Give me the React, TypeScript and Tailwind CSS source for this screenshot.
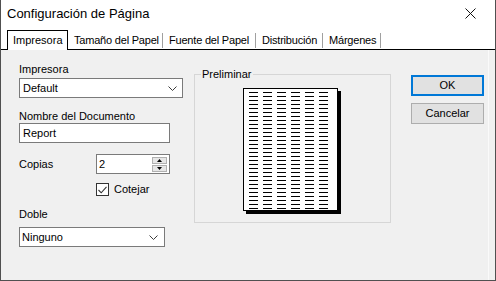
import React from "react";

function Chevron() {
  return (
    <svg width="9" height="5" viewBox="0 0 9 5" className="block">
      <polyline points="0.5,0.5 4.5,4.5 8.5,0.5" fill="none" stroke="#3c3c3c" strokeWidth="1" />
    </svg>
  );
}

function PagePreview() {
  const cols = [5, 19, 33, 47, 61, 75];
  const rows = Array.from({ length: 30 }, (_, i) => 3 + i * 4);
  return (
    <div className="w-[95px] h-[123px] border border-black bg-white shadow-[3px_3px_0_#000] box-border">
      <svg width="93" height="121" viewBox="0 0 93 121" className="block">
        {rows.map((y) =>
          cols.map((x) => <rect key={`${x}-${y}`} x={x} y={y} width={9} height={1} fill="#000" />)
        )}
      </svg>
    </div>
  );
}

export default function App() {
  const tabs = [
    { label: "Tamaño del Papel", w: "w-[95px]" },
    { label: "Fuente del Papel", w: "w-[93px]" },
    { label: "Distribución", w: "w-[67px]" },
    { label: "Márgenes", w: "w-[58px]" },
  ];
  return (
    <div className="w-[496px] h-[281px] bg-[#f0f0f0] border-x border-b border-[#505050] box-border flex flex-col font-['Liberation_Sans',Arial,sans-serif] text-[11px] leading-[13px] text-black">
      {/* Title bar */}
      <div className="h-[29px] bg-white flex items-center">
        <div className="pl-[6px] pb-[3px] text-[13px] leading-[15px] flex-1">Configuración de Página</div>
        <div className="w-[50px] h-[29px] pb-[3px] flex items-center justify-center">
          <svg width="11" height="11" viewBox="0 0 11 11">
            <line x1="0.5" y1="0.5" x2="10.5" y2="10.5" stroke="#111" strokeWidth="1" />
            <line x1="10.5" y1="0.5" x2="0.5" y2="10.5" stroke="#111" strokeWidth="1" />
          </svg>
        </div>
      </div>
      {/* Tabs */}
      <div className="h-[21px] bg-white flex items-end">
        <div className="w-[6px] h-full border-b border-black" />
        <div className="w-[61px] h-[20px] border-t border-x border-black flex items-center pl-[5px] bg-white whitespace-nowrap">
          Impresora
        </div>
        <div className="flex-1 h-full border-b border-black flex items-center">
          {tabs.map((t) => (
            <div
              key={t.label}
              className={`${t.w} h-[15px] mt-[2px] border-r border-[#a0a0a0] flex items-center pl-[6px] whitespace-nowrap tracking-[-0.2px]`}
            >
              {t.label}
            </div>
          ))}
        </div>
      </div>
      {/* Panel */}
      <div className="flex-1 flex pl-[18px] mr-[6px] border-r border-[#fafafa]">
        {/* Left column */}
        <div className="w-[165px] flex flex-col pt-[13px]">
          <div className="h-[13px]">Impresora</div>
          <div className="mt-[2px] w-[164px] h-[20px] bg-white border border-[#7a7a7a] flex items-center justify-between pl-[3px] pr-[5px]">
            <span>Default</span>
            <Chevron />
          </div>
          <div className="mt-[12px] h-[13px]">Nombre del Documento</div>
          <div className="w-[151px] h-[20px] bg-white border border-[#7a7a7a] flex items-center pl-[3px]">Report</div>
          <div className="mt-[11px] h-[20px] flex items-center">
            <span className="w-[77px]">Copias</span>
            <div className="w-[74px] h-[20px] bg-white border border-[#7a7a7a] flex items-center justify-between pl-[2px] pr-[2px]">
              <span>2</span>
              <div className="flex flex-col gap-[1px]">
                <div className="w-[15px] h-[7px] bg-[#e6e6e6] border border-[#b0b0b0] flex items-center justify-center">
                  <svg width="5" height="3" viewBox="0 0 5 3" className="block"><polygon points="2.5,0 5,3 0,3" fill="#000" /></svg>
                </div>
                <div className="w-[15px] h-[7px] bg-[#e6e6e6] border border-[#b0b0b0] flex items-center justify-center">
                  <svg width="5" height="3" viewBox="0 0 5 3" className="block"><polygon points="0,0 5,0 2.5,3" fill="#000" /></svg>
                </div>
              </div>
            </div>
          </div>
          <div className="mt-[9px] h-[13px] flex items-center pl-[77px]">
            <div className="w-[13px] h-[13px] bg-white border border-[#333] flex items-center justify-center">
              <svg width="9" height="8" viewBox="0 0 9 8" className="block">
                <polyline points="0.5,4 3.2,6.8 8.5,0.8" fill="none" stroke="#333" strokeWidth="1.1" />
              </svg>
            </div>
            <span className="ml-[5px]">Cotejar</span>
          </div>
          <div className="mt-[12px] h-[13px]">Doble</div>
          <div className="mt-[6px] w-[146px] h-[20px] bg-white border border-[#7a7a7a] flex items-center justify-between pl-[2px] pr-[6px]">
            <span>Ninguno</span>
            <Chevron />
          </div>
        </div>
        {/* Preview group */}
        <fieldset className="ml-[10px] mt-[18px] w-[197px] h-[155px] border border-[#d6d6d6] box-border">
          <legend className="ml-[6px] px-[1px] leading-[13px]">Preliminar</legend>
          <div className="mt-[7px] ml-[48px]">
            <PagePreview />
          </div>
        </fieldset>
        {/* Buttons */}
        <div className="ml-[20px] mt-[25px] flex flex-col gap-[7px]">
          <button className="w-[73px] h-[21px] bg-[#e1e1e1] border-2 border-[#0078d7] flex items-center justify-center text-[11px]">
            OK
          </button>
          <button className="w-[73px] h-[21px] bg-[#e1e1e1] border border-[#adadad] flex items-center justify-center text-[11px]">
            Cancelar
          </button>
        </div>
      </div>
    </div>
  );
}
